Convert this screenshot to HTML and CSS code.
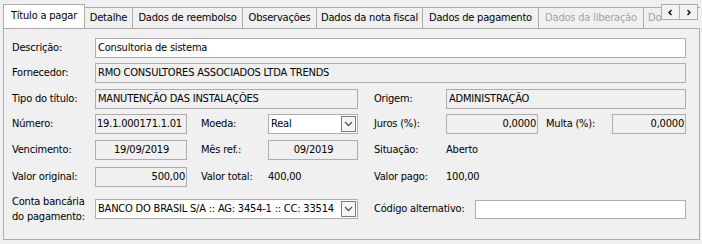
FILE: index.html
```html
<!DOCTYPE html>
<html lang="pt-BR">
<head>
<meta charset="utf-8">
<title>Título a pagar</title>
<link rel="stylesheet" href="styles.css">
</head>
<body>
<div class="window">
  <div class="tabstrip">
    <div class="tab active t1">Título a pagar</div>
    <div class="tab t2">Detalhe</div>
    <div class="tab t3">Dados de reembolso</div>
    <div class="tab t4">Observações</div>
    <div class="tab t5">Dados da nota fiscal</div>
    <div class="tab t6">Dados de pagamento</div>
    <div class="tab disabled t7">Dados da liberação</div>
    <div class="tab disabled t8">Do</div>
    <div class="scroller">
      <div class="sbtn"><svg width="7" height="7" viewBox="0 0 7 7"><polyline points="4.5,1 2,3.5 4.5,6" fill="none" stroke="#000" stroke-width="1.3"/></svg></div>
      <div class="sbtn"><svg width="7" height="7" viewBox="0 0 7 7"><polyline points="2.5,1 5,3.5 2.5,6" fill="none" stroke="#000" stroke-width="1.3"/></svg></div>
    </div>
  </div>
  <div class="panel">
    <div class="form">
      <div class="lbl c1">Descrição:</div>
      <div class="box edit w-full">Consultoria de sistema</div>

      <div class="lbl c1">Fornecedor:</div>
      <div class="box w-full">RMO CONSULTORES ASSOCIADOS LTDA TRENDS</div>

      <div class="lbl c1">Tipo do título:</div>
      <div class="box w-left">MANUTENÇÃO DAS INSTALAÇÕES</div>
      <div class="lbl c7">Origem:</div>
      <div class="box w-right">ADMINISTRAÇÃO</div>

      <div class="lbl c1">Número:</div>
      <div class="box c2 tight">19.1.000171.1.01</div>
      <div class="lbl c4">Moeda:</div>
      <div class="box edit select c5"><span class="val">Real</span><span class="dd"><svg width="9" height="6" viewBox="0 0 9 6"><polyline points="1,1 4.5,4.5 8,1" fill="none" stroke="#555" stroke-width="1.3"/></svg></span></div>
      <div class="lbl c7">Juros (%):</div>
      <div class="box c8 num">0,0000</div>
      <div class="lbl c10">Multa (%):</div>
      <div class="box c11 num">0,0000</div>

      <div class="lbl c1">Vencimento:</div>
      <div class="box c2 ctr">19/09/2019</div>
      <div class="lbl c4">Mês ref.:</div>
      <div class="box c5 ctr">09/2019</div>
      <div class="lbl c7">Situação:</div>
      <div class="lbl c8">Aberto</div>

      <div class="lbl c1">Valor original:</div>
      <div class="box c2 num">500,00</div>
      <div class="lbl c4">Valor total:</div>
      <div class="lbl c5">400,00</div>
      <div class="lbl c7">Valor pago:</div>
      <div class="lbl c8">100,00</div>

      <div class="lbl two c1">Conta bancária<br>do pagamento:</div>
      <div class="box edit select w-left last"><span class="val">BANCO DO BRASIL S/A :: AG: 3454-1 :: CC: 33514</span><span class="dd"><svg width="9" height="6" viewBox="0 0 9 6"><polyline points="1,1 4.5,4.5 8,1" fill="none" stroke="#555" stroke-width="1.3"/></svg></span></div>
      <div class="codealt w-code last">
        <span class="lbl">Código alternativo:</span>
        <div class="box edit grow"></div>
      </div>
    </div>
  </div>
</div>
</body>
</html>
```

FILE: styles.css
```css
* { box-sizing: border-box; }
html, body { margin: 0; padding: 0; }
body {
  background: #f0f0f0;
  font-family: "DejaVu Sans", "Liberation Sans", sans-serif;
  font-stretch: condensed;
  font-size: 11px;
  letter-spacing: -0.2px;
  color: #000;
  width: 702px;
  height: 244px;
  overflow: hidden;
}
.window {
  margin: 4px 0 0 3px;
  width: 697px;
}
.tabstrip {
  position: relative;
  display: flex;
  align-items: flex-end;
  height: 24px;
  width: 697px;
  clip-path: inset(-2px 0 -2px 0);
}
.tab {
  flex: none;
  height: 21px;
  line-height: 19px;
  border: 1px solid #acacac;
  border-bottom: none;
  background: #f0f0f0;
  text-align: center;
  white-space: nowrap;
  overflow: hidden;
  margin-left: -1px;
}
.tab.active {
  height: 25px;
  line-height: 22px;
  margin-left: 0;
  margin-bottom: -1px;
  background: #fff;
  position: relative;
  z-index: 2;
}
.tab.disabled { color: #a3a3a3; }
.t1 { width: 82px; }
.t2 { width: 49px; }
.t3 { width: 111px; }
.t4 { width: 75px; }
.t5 { width: 107px; }
.t6 { width: 117px; }
.t7 { width: 106px; }
.t8 { width: 60px; text-align: left; padding-left: 4px; }
.scroller {
  position: absolute;
  left: 659px;
  top: 0;
  display: flex;
  z-index: 3;
}
.sbtn {
  width: 19px;
  height: 16px;
  border: 1px solid #adadad;
  background: #f3f3f3;
  display: flex;
  align-items: center;
  justify-content: center;
  margin-left: -1px;
}
.panel {
  position: relative;
  z-index: 1;
  border: 1px solid #acacac;
  height: 212px;
  background: #f0f0f0;
  padding: 9px 0 0 8px;
}
.form {
  display: grid;
  grid-template-columns: 83px 92px 14px 67px 90px 16px 72px 92px 8px 66px 74px;
  grid-template-rows: 25px 26px 25px 26px 27px 26px 32px;
  align-items: start;
}
.lbl {
  height: 20px;
  line-height: 20px;
  white-space: nowrap;
}
.lbl.two {
  height: auto;
  line-height: 15px;
  align-self: center;
}
.last { align-self: center; }
.box {
  height: 20px;
  line-height: 18px;
  border: 1px solid #adadad;
  background: #f0f0f0;
  padding: 0 1px 0 2px;
  white-space: nowrap;
  overflow: hidden;
}
.box.edit { background: #fff; }
.box.num { text-align: right; padding-right: 1px; }
.box.ctr { text-align: center; }
.box.tight { padding: 0 0 0 1px; }
.select { display: flex; align-items: center; padding-right: 1px; }
.select .val { flex: 1; overflow: hidden; }
.dd {
  flex: none;
  width: 15px;
  height: 16px;
  border: 1px solid #7a7a7a;
  background: #f6f6f6;
  display: flex;
  align-items: center;
  justify-content: center;
}
.c1 { grid-column: 1; }
.c2 { grid-column: 2; }
.c4 { grid-column: 4; }
.c5 { grid-column: 5; }
.c7 { grid-column: 7; }
.c8 { grid-column: 8; }
.c10 { grid-column: 10; }
.c11 { grid-column: 11; }
.w-full { grid-column: 2 / 12; }
.w-left { grid-column: 2 / 6; }
.w-right { grid-column: 8 / 12; }
.w-code { grid-column: 7 / 12; }
.codealt { display: flex; align-items: center; gap: 10px; }
.grow { flex: 1; height: 19px; }
```
